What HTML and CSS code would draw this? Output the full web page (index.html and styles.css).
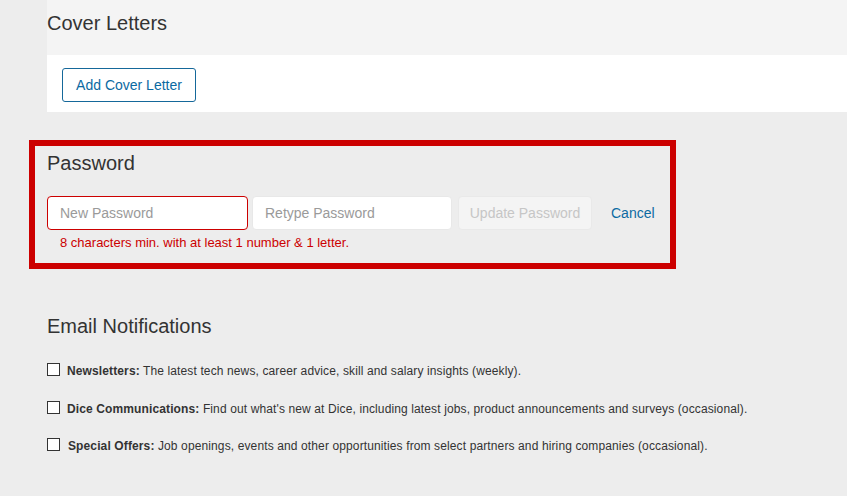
FILE: index.html
```html
<!DOCTYPE html>
<html lang="en">
<head>
  <meta charset="UTF-8" />
  <meta name="viewport" content="width=device-width, initial-scale=1.0" />
  <title>Account Settings</title>
  <link rel="stylesheet" href="styles.css">
</head>
<body>
  <div class="page">
    <div class="card">
      <div class="card-header">
        <h2>Cover Letters</h2>
      </div>
      <div class="card-body">
        <button class="btn-outline">Add Cover Letter</button>
      </div>
    </div>

    <div class="password-box">
      <h2>Password</h2>
      <div class="password-row">
        <input type="password" class="field field-error new-pw" placeholder="New Password" />
        <input type="password" class="field retype-pw" placeholder="Retype Password" />
        <button class="btn-disabled" disabled>Update Password</button>
        <a href="#" class="cancel">Cancel</a>
      </div>
      <p class="help-error">8 characters min. with at least 1 number &amp; 1 letter.</p>
    </div>

    <div class="notifications">
      <h2>Email Notifications</h2>
      <label class="option">
        <span class="check"></span>
        <span><b>Newsletters:</b> The latest tech news, career advice, skill and salary insights (weekly).</span>
      </label>
      <label class="option">
        <span class="check"></span>
        <span><b>Dice Communications:</b> Find out what's new at Dice, including latest jobs, product announcements and surveys (occasional).</span>
      </label>
      <label class="option">
        <span class="check"></span>
        <span class="shift"><b>Special Offers:</b> Job openings, events and other opportunities from select partners and hiring companies (occasional).</span>
      </label>
    </div>
  </div>
</body>
</html>
```

FILE: styles.css
```css
body {
  font-family: "Liberation Sans", Arial, sans-serif;
  background: #ededed;
  color: #333;
  margin: 0;
}
h2 {
  font-size: 20px;
  font-weight: normal;
  line-height: 22px;
  margin: 0;
  color: #333;
}
.page {
  padding-left: 29px;
  padding-bottom: 30px;
}
.card {
  margin-left: 18px;
  background: #fff;
}
.card-header {
  background: #f4f4f4;
  height: 55px;
  padding-top: 12px;
  box-sizing: border-box;
}
.card-body {
  height: 57px;
  padding: 13px 15px 0;
  box-sizing: border-box;
}
.btn-outline {
  font-family: inherit;
  font-size: 14px;
  color: #0b6aa2;
  background: #fff;
  border: 1px solid #15689a;
  border-radius: 3px;
  height: 34px;
  width: 134px;
  padding: 0;
  cursor: pointer;
}
.password-box {
  margin-top: 28px;
  width: 647px;
  box-sizing: border-box;
  border: 6px solid #cc0000;
  padding: 6px 12px 12px;
}
.password-row {
  display: flex;
  align-items: center;
  margin-top: 22px;
}
.field {
  font-family: inherit;
  font-size: 14px;
  height: 34px;
  box-sizing: border-box;
  padding: 0 12px;
  border: 1px solid #e8e8e8;
  border-radius: 4px;
  background: #fff;
  color: #333;
  outline: none;
}
.field::placeholder {
  color: #9a9a9a;
}
.field-error {
  border-color: #cc0000;
}
.new-pw {
  width: 201px;
}
.retype-pw {
  width: 200px;
  margin-left: 4px;
}
.btn-disabled {
  font-family: inherit;
  font-size: 14px;
  height: 34px;
  width: 134px;
  margin-left: 6px;
  padding: 0;
  background: #f4f4f4;
  color: #c6c6c6;
  border: 1px solid #e9e9e9;
  border-radius: 4px;
}
.cancel {
  margin-left: 19px;
  font-size: 14px;
  color: #0b6aa2;
  text-decoration: none;
}
.help-error {
  margin: 5px 0 0 13px;
  font-size: 13px;
  line-height: 16px;
  color: #cc0000;
}
.notifications {
  margin-top: 46px;
  padding-left: 18px;
}
.notifications h2 {
  margin-bottom: 26px;
}
.option {
  display: flex;
  align-items: flex-start;
  font-size: 12px;
  line-height: 17px;
  letter-spacing: 0.12px;
  margin-bottom: 20.5px;
  color: #333;
}
.option b {
  font-weight: bold;
}
.check {
  width: 13px;
  height: 13px;
  box-sizing: border-box;
  border: 1px solid #333;
  background: #fff;
  margin-right: 7px;
  flex: none;
}
.shift {
  margin-left: 1px;
}
```
